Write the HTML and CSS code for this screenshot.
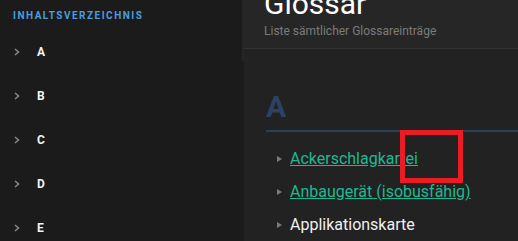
FILE: index.html
```html
<!DOCTYPE html>
<html lang="de">
<head>
<meta charset="utf-8">
<title>Glossar</title>
<link rel="stylesheet" href="styles.css">
</head>
<body>
<div class="app">
  <aside class="sidebar">
    <div class="toc-title">INHALTSVERZEICHNIS</div>
    <ul class="toc">
      <li class="toc-item"><svg class="chev" viewBox="0 0 6 8" width="6" height="8"><path d="M1 1 L4.5 4 L1 7" fill="none" stroke="#8a8a8a" stroke-width="1.5"/></svg><span>A</span></li>
      <li class="toc-item"><svg class="chev" viewBox="0 0 6 8" width="6" height="8"><path d="M1 1 L4.5 4 L1 7" fill="none" stroke="#8a8a8a" stroke-width="1.5"/></svg><span>B</span></li>
      <li class="toc-item"><svg class="chev" viewBox="0 0 6 8" width="6" height="8"><path d="M1 1 L4.5 4 L1 7" fill="none" stroke="#8a8a8a" stroke-width="1.5"/></svg><span>C</span></li>
      <li class="toc-item"><svg class="chev" viewBox="0 0 6 8" width="6" height="8"><path d="M1 1 L4.5 4 L1 7" fill="none" stroke="#8a8a8a" stroke-width="1.5"/></svg><span>D</span></li>
      <li class="toc-item"><svg class="chev" viewBox="0 0 6 8" width="6" height="8"><path d="M1 1 L4.5 4 L1 7" fill="none" stroke="#8a8a8a" stroke-width="1.5"/></svg><span>E</span></li>
    </ul>
    <div class="scroll-thumb"></div>
  </aside>
  <main class="main">
    <header class="page-header">
      <h1 class="page-title">Glossar</h1>
      <p class="page-sub">Liste sämtlicher Glossareinträge</p>
    </header>
    <section class="content">
      <h2 class="letter">A</h2>
      <ul class="entries">
        <li><a href="#" class="entry-link">Ackerschlagkartei</a></li>
        <li><a href="#" class="entry-link">Anbaugerät (isobusfähig)</a></li>
        <li><span class="entry-text">Applikationskarte</span></li>
      </ul>
    </section>
  </main>
  <div class="highlight-box"></div>
</div>
</body>
</html>
```
FILE: styles.css
```css
* { box-sizing: border-box; }
html, body { margin: 0; padding: 0; }
body {
  width: 518px;
  height: 241px;
  overflow: hidden;
  background: #222222;
  font-family: Roboto, "Liberation Sans", sans-serif;
}
.app {
  position: relative;
  display: flex;
  height: 241px;
}
.sidebar {
  position: relative;
  width: 244px;
  flex: 0 0 244px;
  background: #1b1b1b;
  padding: 8px 0 0 13px;
}
.toc-title {
  font-size: 10px;
  line-height: 16px;
  font-weight: 700;
  letter-spacing: 1.5px;
  color: #4a9edf;
}
.toc {
  list-style: none;
  margin: 6px 0 0;
  padding: 0;
}
.toc-item {
  height: 44px;
  display: flex;
  align-items: center;
  color: #f2f2f2;
  font-weight: 700;
  font-size: 12px;
}
.chev { margin-left: 1px; margin-right: 17px; }
.scroll-thumb {
  position: absolute;
  right: 0;
  top: 0;
  width: 2px;
  height: 61px;
  background: #262626;
}
.main {
  flex: 1;
  min-width: 0;
}
.page-header {
  background: #262626;
  height: 62px;
  border-bottom: 1px solid #333333;
  padding: 0 20px;
}
.page-title {
  margin: -13px 0 0;
  font-size: 30px;
  line-height: 34px;
  font-weight: 400;
  color: #ffffff;
}
.page-sub {
  margin: 2px 0 0;
  font-size: 12px;
  line-height: 16px;
  color: #7b7b7b;
}
.content {
  padding: 0 0 0 22px;
}
.letter {
  margin: 0;
  padding-top: 40px;
  font-size: 30px;
  line-height: 36px;
  font-weight: 700;
  color: #2c4263;
  border-bottom: 2px solid #2d3e57;
  padding-bottom: 5px;
}
.entries {
  list-style: none;
  margin: 10px 0 0;
  padding: 0 0 0 11px;
}
.entries li {
  position: relative;
  line-height: 33px;
  font-size: 16px;
  padding-left: 13px;
}
.entries li::before {
  content: "";
  position: absolute;
  left: 0;
  top: 14px;
  border-left: 5px solid #7a7a7a;
  border-top: 3px solid transparent;
  border-bottom: 3px solid transparent;
}
.entry-link {
  color: #1db992;
  text-decoration: underline;
}
.entry-text { color: #f0f0f0; }
.highlight-box {
  position: absolute;
  left: 400px;
  top: 130px;
  width: 63px;
  height: 53px;
  border: 5px solid #ec1c24;
}
```
